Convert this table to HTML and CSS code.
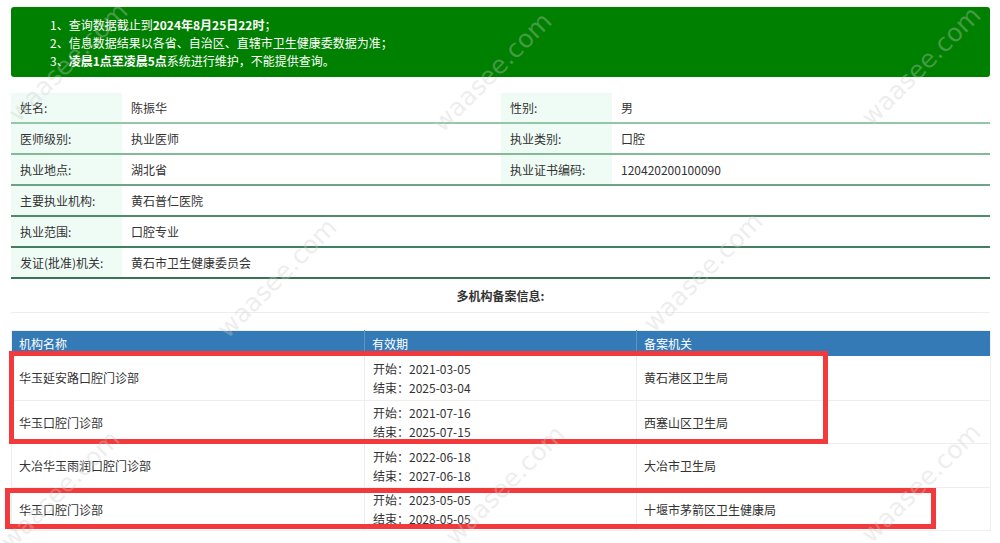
FILE: index.html
```html
<!DOCTYPE html>
<html lang="zh-CN">
<head>
<meta charset="utf-8">
<title>医师执业注册信息查询</title>
<link rel="stylesheet" href="styles.css">
</head>
<body>
<div class="page">
  <div class="notice">
    <div class="notice-line">1、查询数据截止到<b>2024年8月25日22时</b>；</div>
    <div class="notice-line">2、信息数据结果以各省、自治区、直辖市卫生健康委数据为准；</div>
    <div class="notice-line">3、<b>凌晨1点至凌晨5点</b>系统进行维护，不能提供查询。</div>
  </div>

  <div class="info">
    <div class="info-row">
      <div class="lbl">姓名:</div><div class="val">陈振华</div>
      <div class="lbl">性别:</div><div class="val">男</div>
    </div>
    <div class="info-row">
      <div class="lbl">医师级别:</div><div class="val">执业医师</div>
      <div class="lbl">执业类别:</div><div class="val">口腔</div>
    </div>
    <div class="info-row">
      <div class="lbl">执业地点:</div><div class="val">湖北省</div>
      <div class="lbl">执业证书编码:</div><div class="val">120420200100090</div>
    </div>
    <div class="info-row">
      <div class="lbl">主要执业机构:</div><div class="val wide">黄石普仁医院</div>
    </div>
    <div class="info-row">
      <div class="lbl">执业范围:</div><div class="val wide">口腔专业</div>
    </div>
    <div class="info-row">
      <div class="lbl">发证(批准)机关:</div><div class="val wide">黄石市卫生健康委员会</div>
    </div>
  </div>

  <div class="section-title">多机构备案信息:</div>

  <table class="orgs">
    <colgroup>
      <col class="c1"><col class="c2"><col class="c3">
    </colgroup>
    <thead>
      <tr><th>机构名称</th><th>有效期</th><th>备案机关</th></tr>
    </thead>
    <tbody>
      <tr>
        <td>华玉延安路口腔门诊部</td>
        <td><div>开始：2021-03-05</div><div>结束：2025-03-04</div></td>
        <td>黄石港区卫生局</td>
      </tr>
      <tr>
        <td>华玉口腔门诊部</td>
        <td><div>开始：2021-07-16</div><div>结束：2025-07-15</div></td>
        <td>西塞山区卫生局</td>
      </tr>
      <tr>
        <td>大冶华玉雨润口腔门诊部</td>
        <td><div>开始：2022-06-18</div><div>结束：2027-06-18</div></td>
        <td>大冶市卫生局</td>
      </tr>
      <tr>
        <td>华玉口腔门诊部</td>
        <td><div>开始：2023-05-05</div><div>结束：2028-05-05</div></td>
        <td>十堰市茅箭区卫生健康局</td>
      </tr>
    </tbody>
  </table>

  <div class="mark mark-1"></div>
  <div class="mark mark-2"></div>

  <div class="watermarks" aria-hidden="true">
    <span class="wm wm-a">waasee.com</span>
    <span class="wm wm-b">waasee.com</span>
    <span class="wm wm-c">waasee.com</span>
    <span class="wm wm-d">waasee.com</span>
    <span class="wm wm-e">waasee.com</span>
    <span class="wm wm-f">waasee.com</span>
    <span class="wm wm-g">waasee.com</span>
    <span class="wm wm-h">waasee.com</span>
  </div>
</div>
</body>
</html>
```

FILE: styles.css
```css
* { box-sizing: border-box; }

html, body {
  margin: 0;
  padding: 0;
  background: #fff;
}

body {
  font-family: "Noto Sans CJK SC", "Noto Sans", "Liberation Sans", sans-serif;
  font-size: 12px;
  color: #333;
}

.page {
  position: relative;
  width: 1000px;
  height: 543px;
  overflow: hidden;
  padding: 7px 10px 0 11px;
}

/* notice */
.notice {
  background: #008000;
  color: #fff;
  border-radius: 3px;
  height: 70px;
  padding: 9px 0 0 39px;
}
.notice-line {
  line-height: 18px;
  height: 18px;
}
.notice-line b { font-weight: 700; }

/* info table */
.info {
  margin-top: 16px;
}
.info-row {
  display: grid;
  grid-template-columns: 111px 379px 111px 1fr;
  height: 31px;
  border-bottom: 2px solid #3f7f5e;
}
.info-row:nth-child(1) { border-bottom-color: #96c6a8; }
.info-row:nth-child(2) { border-bottom-color: #86b99a; }
.info-row:nth-child(3) { border-bottom-color: #6ea486; }
.info-row:nth-child(4) { border-bottom-color: #4f8c6c; }
.info-row:nth-child(5) { border-bottom-color: #427f60; }
.info-row:nth-child(6) { border-bottom-color: #3a7457; }

.lbl, .val {
  display: flex;
  align-items: center;
  padding-left: 9px;
  line-height: 16px;
}
.lbl { background: #effcf6; }
.val.wide { grid-column: 2 / 5; }

.section-title {
  height: 34px;
  line-height: 34px;
  text-align: center;
  font-weight: 700;
  border-bottom: 1px solid #eeeeee;
}

/* organisations table */
.orgs {
  margin-top: 17px;
  width: 979px;
  border-collapse: collapse;
  table-layout: fixed;
  border: 1px solid #eeeeee;
}
.orgs col.c1 { width: 353px; }
.orgs col.c2 { width: 272px; }
.orgs col.c3 { width: 354px; }

.orgs th {
  background: #337ab7;
  color: #fff;
  font-weight: 400;
  text-align: left;
  height: 25px;
  padding: 2px 0 0 7px;
  line-height: 16px;
  border-left: 1px solid #5c95c7;
}
.orgs th:first-child { border-left: none; }

.orgs td {
  height: 44px;
  padding: 0 0 0 7px;
  vertical-align: middle;
  line-height: 19px;
  border-bottom: 1px solid #eeeeee;
  border-left: 1px solid #eeeeee;
}
.orgs td:nth-child(2) { padding-left: 8px; }
.orgs tbody tr:nth-child(1) td { height: 45px; }
.orgs tbody tr:nth-child(2) td { height: 43px; }
.orgs tbody tr:nth-child(4) td { height: 43px; }

/* red annotation frames over the table */
.mark {
  position: absolute;
  border: 5px solid #f23a3c;
  pointer-events: none;
}
.mark-1 { left: 9px; top: 351px; width: 819px; height: 93px; }
.mark-2 { left: 5px; top: 488px; width: 931px; height: 41px; }

/* watermarks */
.watermarks {
  position: absolute;
  inset: 0;
  pointer-events: none;
  overflow: hidden;
}
.wm {
  position: absolute;
  font-family: "DejaVu Sans", sans-serif;
  font-size: 25px;
  white-space: nowrap;
  color: rgba(205, 205, 205, 0.34);
  transform: translate(-50%, -50%) rotate(-45deg);
}
.wm-a { left: 68px;  top: 62px; }
.wm-b { left: 492px; top: 72px; }
.wm-c { left: 921px; top: 66px; }
.wm-d { left: 277px; top: 278px; }
.wm-e { left: 703px; top: 272px; }
.wm-f { left: 60px;  top: 490px; }
.wm-g { left: 505px; top: 485px; }
.wm-h { left: 921px; top: 483px; }
```
